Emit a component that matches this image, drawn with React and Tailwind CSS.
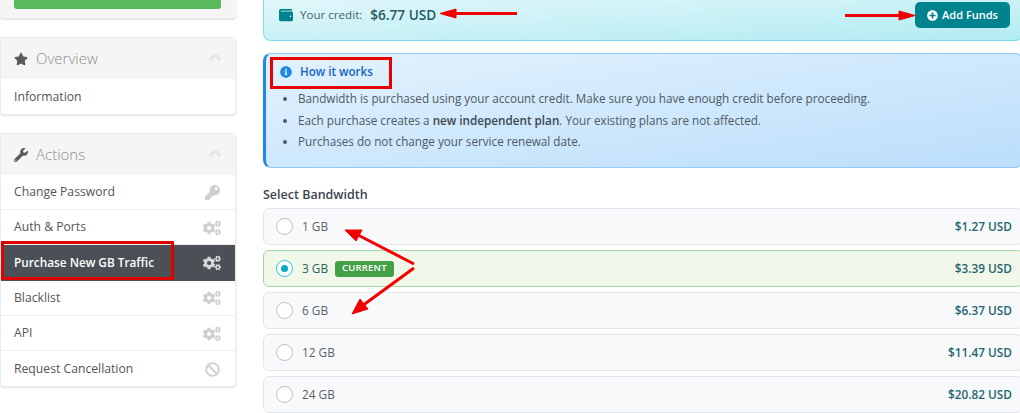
import React from 'react';
import { FaStar, FaWrench, FaKey, FaCogs, FaBan, FaWallet, FaInfoCircle, FaPlusCircle, FaAngleUp } from 'react-icons/fa';

const actions = [
  { label: 'Change Password', icon: FaKey, h: 'h-[35px]' },
  { label: 'Auth & Ports', icon: FaCogs, h: 'h-[35px] pt-[1px]' },
  { label: 'Purchase New GB Traffic', icon: FaCogs, h: 'h-[36px]', active: true },
  { label: 'Blacklist', icon: FaCogs, h: 'h-[35px]' },
  { label: 'API', icon: FaCogs, h: 'h-[35px] pt-[1px]' },
  { label: 'Request Cancellation', icon: FaBan, h: 'h-[35px] pt-[1px]' },
];

const plans = [
  { size: '1 GB', price: '$1.27 USD' },
  { size: '3 GB', price: '$3.39 USD', current: true },
  { size: '6 GB', price: '$6.37 USD' },
  { size: '12 GB', price: '$11.47 USD' },
  { size: '24 GB', price: '$20.82 USD' },
];

const PanelHead = ({ icon: Icon, title, h }) => (
  <div className={`${h} bg-[#f5f5f5] flex items-center pl-[13px] pr-[10px]`}>
    <Icon className="text-[#58595b] text-[14px] mr-[8px]" />
    <span className="text-[15px] text-[#8d8d8d] font-light">{title}</span>
    <FaAngleUp className="ml-auto mb-[4px] text-[#e6e6e6] text-[20px]" />
  </div>
);

const App = () => {
  return (
    <div className="relative w-[1020px] h-[413px] overflow-hidden bg-white font-['Open_Sans',sans-serif] flex">
      <div className="w-[263px] shrink-0">
        <div className="w-[236px] h-[19px] bg-[#f5f5f5] rounded-b-[4px] border-b border-[#e8e8e8] shadow-sm pl-[14px] pr-[15px]">
          <div className="h-[9px] bg-[#5cb85c] rounded-b-[3px]"></div>
        </div>

        <div className="w-[236px] mt-[18px] bg-white rounded-[4px] border border-[#ececec] shadow-sm overflow-hidden">
          <PanelHead icon={FaStar} title="Overview" h="h-[41px]" />
          <div className="h-[35px] pt-[1px] flex items-center pl-[13px] text-[12.2px] text-[#555]">Information</div>
        </div>

        <div className="w-[236px] mt-[18px] bg-white rounded-[4px] border border-[#ececec] shadow-sm overflow-hidden">
          <PanelHead icon={FaWrench} title="Actions" h="h-[41px]" />
          {actions.map((a) => (
            <div
              key={a.label}
              className={`${a.h} flex items-center pl-[13px] pr-[14px] border-b last:border-b-0 ${a.active ? 'bg-[#4a5055] border-[#4a5055] text-white font-semibold text-[11.8px]' : 'border-[#eeeeee] text-[#555] text-[12.2px]'}`}
            >
              <span>{a.label}</span>
              <a.icon className={`ml-auto ${a.icon === FaCogs ? 'text-[18px]' : 'text-[15px] mr-[1px]'} ${a.active ? 'text-[#d5d7d8]' : 'text-[#cfcfcf]'}`} />
            </div>
          ))}
        </div>
      </div>

      <div className="w-[760px] shrink-0">
        <div className="h-[41px] flex items-center pl-[15px] pr-[12px] pb-[10px] border border-t-0 border-[#80deea] rounded-b-[8px] bg-gradient-to-br from-[#e0f7fa] to-[#b2ebf2]">
          <FaWallet className="text-[#00838f] text-[14px] mr-[7px]" />
          <span className="text-[11.6px] text-[#4a6468] mr-[8px]">Your credit:</span>
          <span className="text-[13.6px] font-semibold text-[#1d5a63]">$6.77 USD</span>
          <button className="ml-auto w-[95px] h-[26px] rounded-[5px] bg-[#00838f] text-white text-[11px] font-semibold flex items-center justify-center gap-[4px]">
            <FaPlusCircle className="text-[11px]" />
            Add Funds
          </button>
        </div>

        <div className="mt-[12px] h-[115px] pl-[14px] pt-[9px] border border-[#90caf9] border-l-[3px] border-l-[#1e88e5] rounded-[8px] bg-gradient-to-br from-[#e3f2fd] to-[#bbdefb]">
          <div className="flex items-center text-[11.6px] font-semibold text-[#1565c0]">
            <FaInfoCircle className="text-[#1e88e5] text-[12px] mr-[8px]" />
            How it works
          </div>
          <ul className="mt-[8px] list-disc pl-[18px] text-[11.7px] leading-[21.5px] text-[#4d5a63] marker:text-[#4d5a63]">
            <li>Bandwidth is purchased using your account credit. Make sure you have enough credit before proceeding.</li>
            <li>Each purchase creates a <b className="font-semibold text-[#3c4850]">new independent plan</b>. Your existing plans are not affected.</li>
            <li>Purchases do not change your service renewal date.</li>
          </ul>
        </div>

        <div className="mt-[18px] text-[12.5px] font-semibold leading-[18px] text-[#3c4650]">Select Bandwidth</div>

        <div className="mt-[4px] flex flex-col gap-[5px]">
          {plans.map((p) => (
            <div
              key={p.size}
              className={`h-[37px] flex items-center pl-[12px] pr-[10px] border rounded-[6px] ${p.current ? 'bg-[#f1f8e9] border-[#a5d6a7]' : 'bg-[#f8f9fb] border-[#e2e6ea]'}`}
            >
              <span className={`w-[17px] h-[17px] rounded-full bg-white flex items-center justify-center border ${p.current ? 'border-[#26c6da]' : 'border-[#b9c1c8]'}`}>
                {p.current && <span className="w-[7px] h-[7px] rounded-full bg-[#00acc1]"></span>}
              </span>
              <span className={`ml-[9px] text-[11.8px] ${p.current ? 'text-[#2d5f66]' : 'text-[#5a6268]'}`}>{p.size}</span>
              {p.current && (
                <span className="ml-[7px] h-[16px] px-[7px] rounded-[3px] bg-[#43a047] text-white text-[9.5px] font-semibold tracking-[0.2px] flex items-center">CURRENT</span>
              )}
              <span className="ml-auto text-[11.8px] font-semibold text-[#1f6670]">{p.price}</span>
            </div>
          ))}
        </div>
      </div>

      {/* annotations drawn on top of the screenshot */}
      <div className="absolute left-[1px] top-[241px] w-[173px] h-[39px] border-[3px] border-[#e00000]"></div>
      <div className="absolute left-[270px] top-[57px] w-[122px] h-[32px] border-[3px] border-[#e80000]"></div>
      <svg className="absolute left-0 top-0 pointer-events-none" width="1020" height="413" fill="#f00000" stroke="#f00000">
        <path d="M517 13.5H456" strokeWidth="3" />
        <path d="M440 13.5L456 9V18Z" />
        <path d="M845 15.5H900" strokeWidth="3" />
        <path d="M915 15.5L899 11V20Z" />
        <path d="M414 264L358 235" strokeWidth="3" />
        <path d="M345 230L362 230L356 241Z" />
        <path d="M414 268L362 306" strokeWidth="3" />
        <path d="M352 314L360 299L368 309Z" />
      </svg>
    </div>
  );
};

export default App;
